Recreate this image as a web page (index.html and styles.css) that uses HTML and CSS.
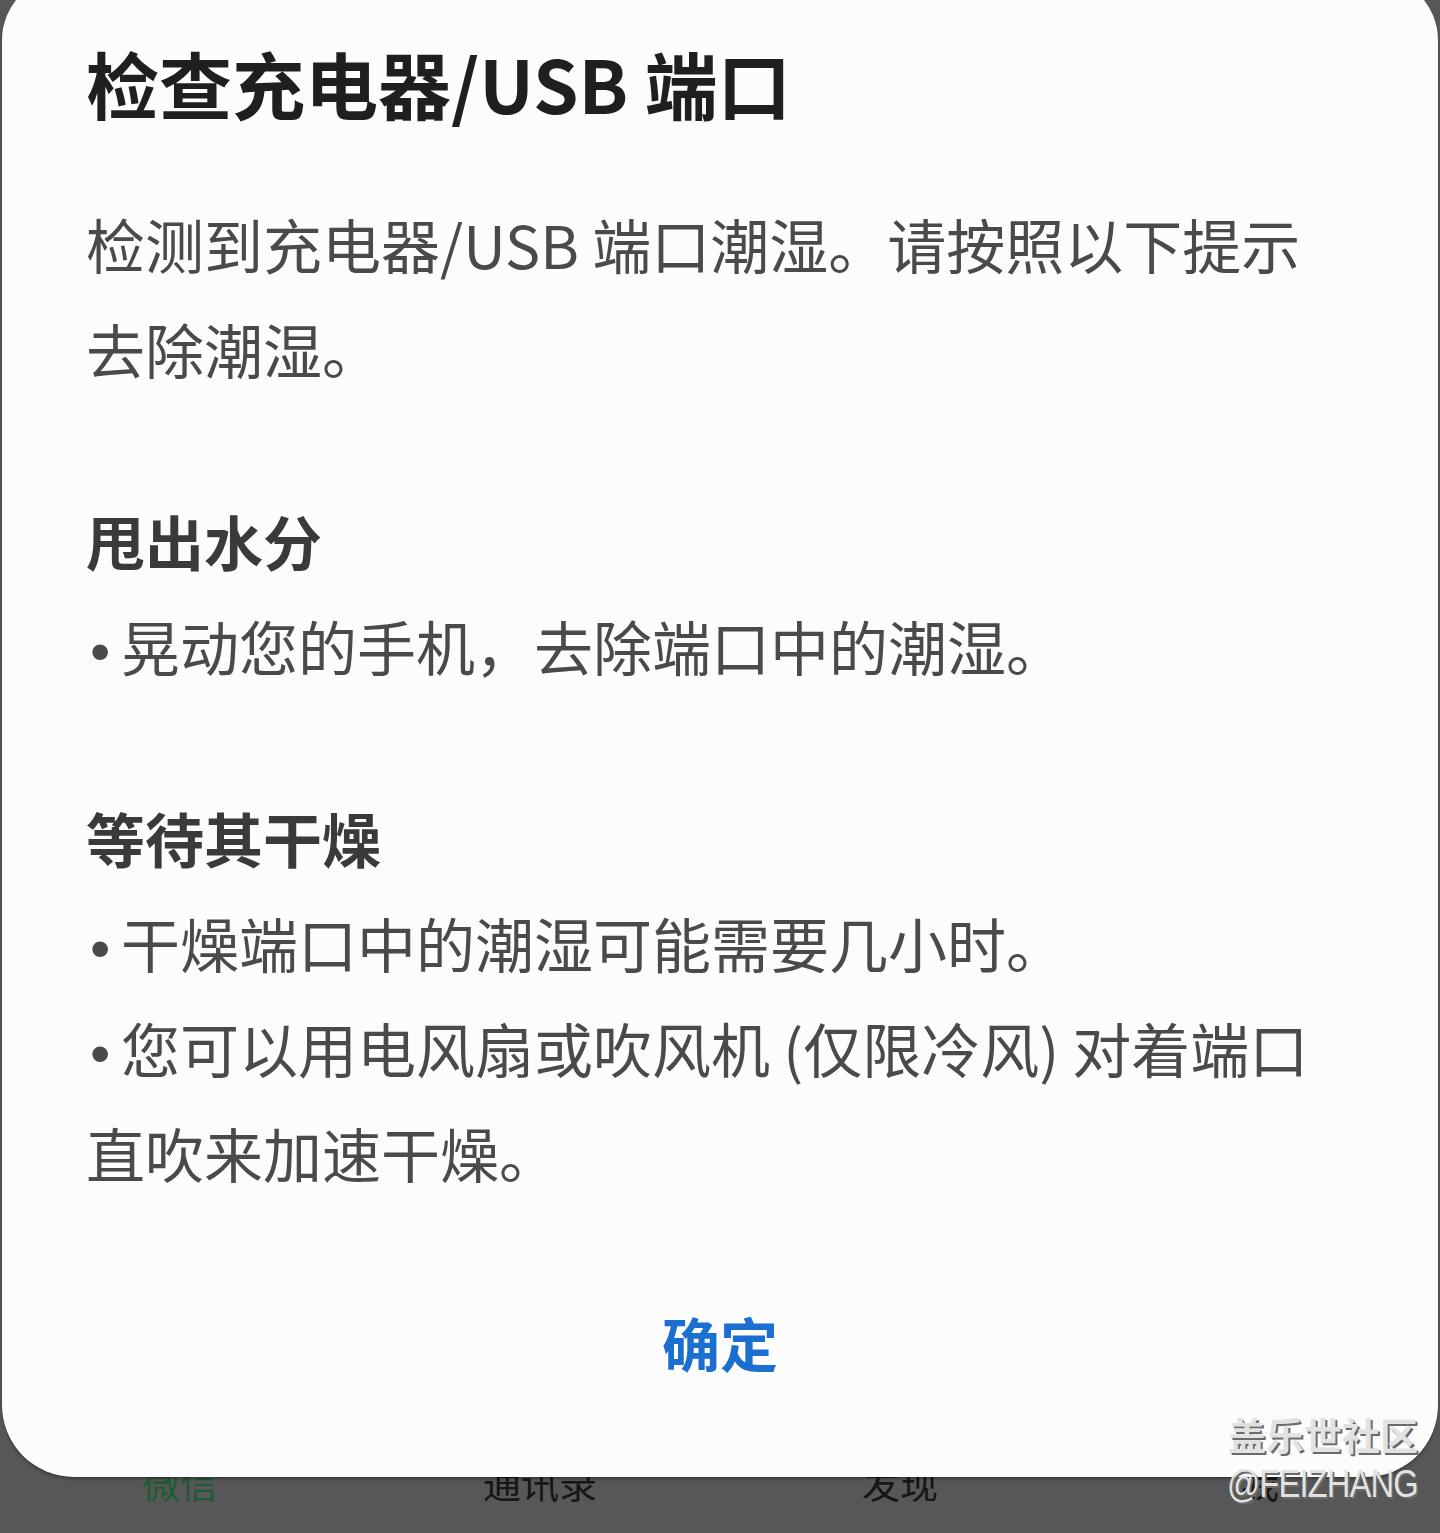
FILE: index.html
```html
<!DOCTYPE html>
<html lang="zh-CN">
<head>
<meta charset="utf-8">
<title>检查充电器/USB 端口</title>
<link rel="stylesheet" href="styles.css">
</head>
<body>
<div class="screen">
  <div class="dialog">
    <h1 class="title">检查充电器/USB 端口</h1>
    <p class="text">检测到充电器/USB 端口潮湿。请按照以下提示去除潮湿。</p>
    <h2 class="heading">甩出水分</h2>
    <p class="text"><span class="dot">•</span>晃动您的手机，去除端口中的潮湿。</p>
    <h2 class="heading">等待其干燥</h2>
    <p class="text"><span class="dot">•</span>干燥端口中的潮湿可能需要几小时。</p>
    <p class="text"><span class="dot">•</span>您可以用电风扇或吹风机 (仅限冷风) 对着端口直吹来加速干燥。</p>
    <div class="actions"><span class="btn">确定</span></div>
  </div>
  <div class="tabbar">
    <span class="tab tab-active">微信</span>
    <span class="tab">通讯录</span>
    <span class="tab">发现</span>
    <span class="tab">我</span>
  </div>
  <div class="watermark">
    <span class="wm-title">盖乐世社区</span>
    <span class="wm-user">@FEIZHANG</span>
  </div>
</div>
</body>
</html>
```

FILE: styles.css
```css
html, body {
  margin: 0;
  padding: 0;
  background: #575757;
  height: 1533px;
  overflow: hidden;
}
body {
  font-family: "Noto Sans CJK SC", "Noto Sans", sans-serif;
}
.screen {
  position: relative;
  height: 1533px;
}
.dialog {
  position: relative;
  z-index: 1;
  margin: -24px 2px 0 2px;
  padding: 54px 100px 82px 84px;
  background: #fcfcfc;
  border-radius: 64px 64px 72px 72px;
  box-shadow: 0 2px 3px rgba(0,0,0,0.35);
}
.title {
  margin: 0;
  font-size: 73px;
  line-height: 105px;
  font-weight: 700;
  color: #1f1f1f;
  white-space: nowrap;
}
.text {
  margin: 0;
  font-size: 59px;
  line-height: 105px;
  color: #4a4a4a;
}
.dot {
  display: inline-block;
  width: 35px;
  line-height: 0;
  font-family: "Liberation Sans", sans-serif;
  font-size: 58px;
  padding-left: 4px;
  box-sizing: border-box;
}
.title + .text {
  margin-top: 56px;
}
.heading {
  margin: 87px 0 0 0;
  font-size: 59px;
  line-height: 105px;
  font-weight: 700;
  color: #3a3a3a;
}
.heading + .text {
  margin-top: 0;
}
.actions {
  margin-top: 85px;
  display: flex;
  justify-content: center;
  margin-left: -84px;
  margin-right: -100px;
}
.btn {
  font-size: 58px;
  line-height: 105px;
  font-weight: 700;
  color: #1b6fd0;
}
.tabbar {
  display: grid;
  grid-template-columns: repeat(4, 1fr);
  margin-top: -30px;
  height: 84px;
}
.tab {
  text-align: center;
  font-size: 38px;
  line-height: 46px;
  padding-top: 12px;
  color: #161616;
}
.tab-active {
  color: #1d5c33;
}
.watermark {
  position: absolute;
  z-index: 2;
  right: 22px;
  top: 1434px;
  display: flex;
  flex-direction: column;
  align-items: flex-end;
  color: #e2e2e2;
  text-shadow: 2px 2px 0 #6a6a6a;
}
.wm-title {
  font-size: 38px;
  line-height: 48px;
  font-weight: 700;
}
.wm-user {
  display: inline-block;
  font-family: "Liberation Sans", "Noto Sans", sans-serif;
  font-size: 38px;
  line-height: 48px;
  letter-spacing: -1px;
  transform: scaleX(0.86);
  transform-origin: right center;
  margin-top: 2px;
}
```
